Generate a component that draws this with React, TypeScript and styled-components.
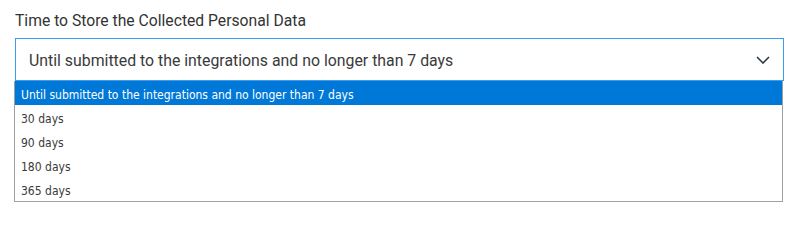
import React from 'react'
import styled, { createGlobalStyle } from 'styled-components'

const GlobalStyle = createGlobalStyle`
  html, body {
    margin: 0;
    padding: 0;
    background: #ffffff;
  }
`

const options = [
  'Until submitted to the integrations and no longer than 7 days',
  '30 days',
  '90 days',
  '180 days',
  '365 days',
]

export default function App() {
  return (
    <>
      <GlobalStyle />
      <StyledField>
        <Label>Time to Store the Collected Personal Data</Label>
        <SelectWrap>
          <SelectBox>
            <SelectValue>{options[0]}</SelectValue>
            <Chevron width="14" height="8" viewBox="0 0 14 8">
              <path d="M1 1 L7 7 L13 1" fill="none" stroke="#2f3a48" strokeWidth="1.6" />
            </Chevron>
          </SelectBox>
          <ListBox>
            {options.map((o, i) => (
              <Option key={o} selected={i === 0}>{o}</Option>
            ))}
          </ListBox>
        </SelectWrap>
      </StyledField>
    </>
  )
}

const StyledField = styled.div`
  padding: 11px 16px 0 15px;
  height: 214px;
  box-sizing: border-box;
`
const Label = styled.div`
  font-family: Roboto, "Liberation Sans", sans-serif;
  font-size: 15.7px;
  line-height: 20px;
  color: #333333;
  margin-bottom: 7px;
`
const SelectWrap = styled.div`
  position: relative;
`
const SelectBox = styled.div`
  height: 43px;
  border: 1px solid #3e9cf0;
  box-sizing: border-box;
  display: flex;
  align-items: center;
  justify-content: space-between;
  padding: 1px 13px 0 13px;
`
const SelectValue = styled.span`
  font-family: Roboto, "Liberation Sans", sans-serif;
  font-size: 15.85px;
  color: #3a3a3a;
`
const Chevron = styled.svg`
  display: block;
`
const ListBox = styled.div`
  position: absolute;
  top: 43px;
  left: -1px;
  right: 1px;
  background: #ffffff;
  border: 1px solid #a0a0a0;
  border-top: none;
`
const Option = styled.div<{ selected?: boolean }>`
  height: 24px;
  box-sizing: border-box;
  padding: 4px 0 0 6px;
  line-height: 20px;
  font-family: "DejaVu Sans Condensed", "DejaVu Sans", sans-serif;
  font-size: 12px;
  color: ${p => (p.selected ? '#ffffff' : '#3a3a3a')};
  background: ${p => (p.selected ? '#0078d7' : 'transparent')};
`
